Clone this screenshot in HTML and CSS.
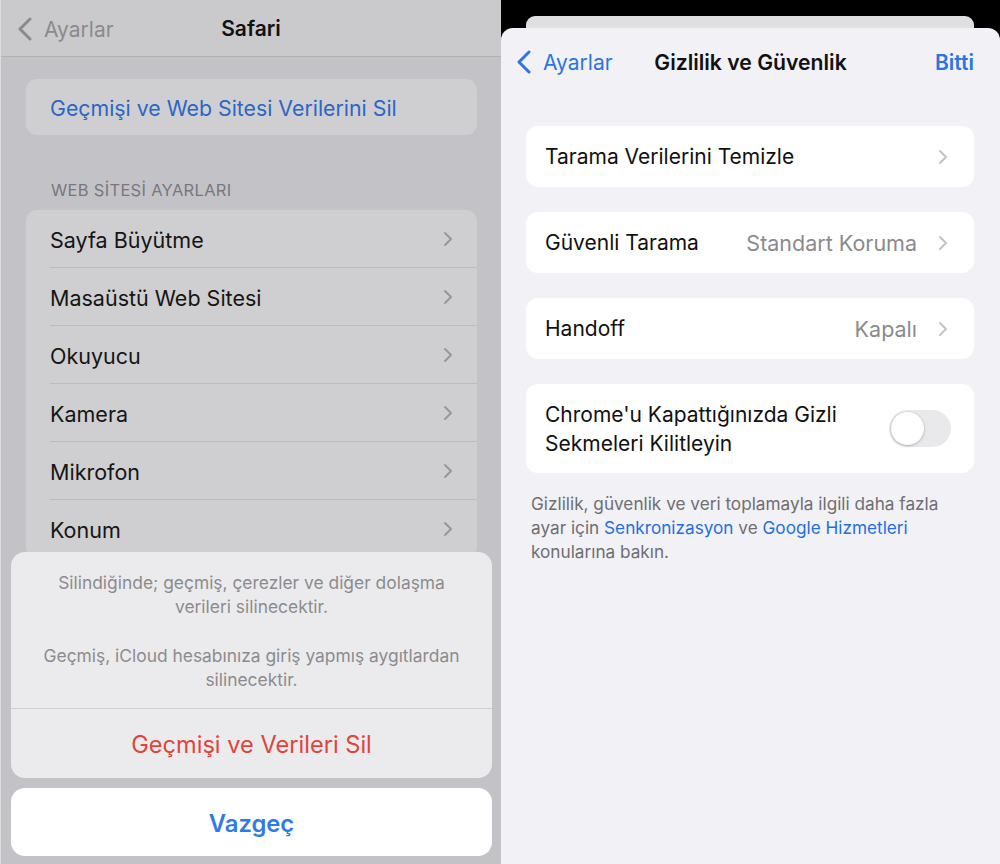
FILE: index.html
```html
<!DOCTYPE html>
<html lang="tr">
<head>
<meta charset="utf-8">
<link rel="stylesheet" href="styles.css">
</head>
<body>
<div class="screen">
  <section class="left">
    <header class="lnav">
      <div class="back">
        <svg class="back-chev" width="16" height="24" viewBox="0 0 16 24"><path d="M13 2 L3 12 L13 22" fill="none" stroke="currentColor" stroke-width="3" stroke-linecap="round" stroke-linejoin="round"/></svg>
        <span>Ayarlar</span>
      </div>
      <div class="ltitle">Safari</div>
    </header>
    <div class="lcontent">
      <div class="lcard single"><span class="link">Geçmişi ve Web Sitesi Verilerini Sil</span></div>
      <div class="lhead">WEB SİTESİ AYARLARI</div>
      <div class="lcard list">
        <div class="lrow"><span>Sayfa Büyütme</span><svg class="chev" width="10" height="16" viewBox="0 0 10 16"><path d="M2 2 L8 8 L2 14" fill="none" stroke="currentColor" stroke-width="2" stroke-linecap="round" stroke-linejoin="round"/></svg></div>
        <div class="lrow"><span>Masaüstü Web Sitesi</span><svg class="chev" width="10" height="16" viewBox="0 0 10 16"><path d="M2 2 L8 8 L2 14" fill="none" stroke="currentColor" stroke-width="2" stroke-linecap="round" stroke-linejoin="round"/></svg></div>
        <div class="lrow"><span>Okuyucu</span><svg class="chev" width="10" height="16" viewBox="0 0 10 16"><path d="M2 2 L8 8 L2 14" fill="none" stroke="currentColor" stroke-width="2" stroke-linecap="round" stroke-linejoin="round"/></svg></div>
        <div class="lrow"><span>Kamera</span><svg class="chev" width="10" height="16" viewBox="0 0 10 16"><path d="M2 2 L8 8 L2 14" fill="none" stroke="currentColor" stroke-width="2" stroke-linecap="round" stroke-linejoin="round"/></svg></div>
        <div class="lrow"><span>Mikrofon</span><svg class="chev" width="10" height="16" viewBox="0 0 10 16"><path d="M2 2 L8 8 L2 14" fill="none" stroke="currentColor" stroke-width="2" stroke-linecap="round" stroke-linejoin="round"/></svg></div>
        <div class="lrow"><span>Konum</span><svg class="chev" width="10" height="16" viewBox="0 0 10 16"><path d="M2 2 L8 8 L2 14" fill="none" stroke="currentColor" stroke-width="2" stroke-linecap="round" stroke-linejoin="round"/></svg></div>
      </div>
    </div>
    <div class="sheet">
      <div class="sheet-group">
        <div class="sheet-msg">
          <p>Silindiğinde; geçmiş, çerezler ve diğer dolaşma<br>verileri silinecektir.</p>
          <p>Geçmiş, iCloud hesabınıza giriş yapmış aygıtlardan<br>silinecektir.</p>
        </div>
        <div class="sheet-btn destructive">Geçmişi ve Verileri Sil</div>
      </div>
      <div class="sheet-cancel">Vazgeç</div>
    </div>
  </section>

  <section class="right">
    <div class="stack">
      <div class="behind"></div>
    </div>
    <div class="modal">
      <header class="rnav">
        <div class="rback">
          <svg width="16" height="24" viewBox="0 0 16 24"><path d="M13 2 L3 12 L13 22" fill="none" stroke="currentColor" stroke-width="3" stroke-linecap="round" stroke-linejoin="round"/></svg>
          <span>Ayarlar</span>
        </div>
        <div class="rtitle">Gizlilik ve Güvenlik</div>
        <div class="done">Bitti</div>
      </header>
      <div class="rcontent">
        <div class="rcard">
          <span class="label">Tarama Verilerini Temizle</span>
          <svg class="rchev" width="10" height="16" viewBox="0 0 10 16"><path d="M2 2 L8 8 L2 14" fill="none" stroke="currentColor" stroke-width="2" stroke-linecap="round" stroke-linejoin="round"/></svg>
        </div>
        <div class="rcard">
          <span class="label">Güvenli Tarama</span>
          <span class="value">Standart Koruma</span>
          <svg class="rchev" width="10" height="16" viewBox="0 0 10 16"><path d="M2 2 L8 8 L2 14" fill="none" stroke="currentColor" stroke-width="2" stroke-linecap="round" stroke-linejoin="round"/></svg>
        </div>
        <div class="rcard">
          <span class="label">Handoff</span>
          <span class="value">Kapalı</span>
          <svg class="rchev" width="10" height="16" viewBox="0 0 10 16"><path d="M2 2 L8 8 L2 14" fill="none" stroke="currentColor" stroke-width="2" stroke-linecap="round" stroke-linejoin="round"/></svg>
        </div>
        <div class="rcard tall">
          <span class="label multi">Chrome'u Kapattığınızda Gizli<br>Sekmeleri Kilitleyin</span>
          <div class="toggle"><div class="knob"></div></div>
        </div>
        <p class="footer">Gizlilik, güvenlik ve veri toplamayla ilgili daha fazla<br>ayar için <span class="blue">Senkronizasyon</span> ve <span class="blue">Google Hizmetleri</span><br>konularına bakın.</p>
      </div>
    </div>
  </section>
</div>
</body>
</html>
```

FILE: styles.css
```css
* { box-sizing: border-box; }
html, body { margin: 0; padding: 0; }
body {
  width: 1000px;
  height: 864px;
  overflow: hidden;
  font-family: "Inter", "Liberation Sans", sans-serif;
  -webkit-font-smoothing: antialiased;
}
.screen {
  display: flex;
  width: 1000px;
  height: 864px;
}

/* ---------- LEFT (Safari, dimmed) ---------- */
.left {
  position: relative;
  width: 501px;
  height: 864px;
  background: #c3c3c7;
  border-left: 1px solid #dcdcde;
}
.lnav {
  position: relative;
  height: 57px;
  background: #cacacc;
  border-bottom: 1px solid #b3b3b6;
  display: flex;
  align-items: center;
  justify-content: center;
  padding-top: 1px;
}
.back {
  position: absolute;
  left: 16px;
  top: 1px;
  height: 56px;
  display: flex;
  align-items: center;
  gap: 11px;
  color: #8a8a8d;
  font-size: 21px;
}
.back-chev { color: #8a8a8d; }
.ltitle {
  font-size: 21px;
  font-weight: 600;
  color: #111;
}
.lcontent {
  padding: 22px 24px 0 25px;
}
.lcard {
  background: #cfcfd1;
  border-radius: 11px;
}
.lcard.single {
  height: 56px;
  display: flex;
  align-items: center;
  padding-left: 24px;
  padding-top: 2px;
}
.link {
  color: #2b66c6;
  font-size: 21.3px;
}
.lhead {
  padding: 45px 0 10px 25px;
  font-size: 16.5px;
  color: #78787c;
  letter-spacing: 0.3px;
}
.lcard.list {
  padding-left: 24px;
}
.lrow {
  height: 58px;
  display: flex;
  align-items: center;
  justify-content: space-between;
  padding-right: 24px;
  padding-top: 2px;
  font-size: 21.5px;
  color: #151515;
  border-bottom: 1px solid #bcbcbe;
}
.lrow:last-child { border-bottom: none; }
.chev { color: #98989b; margin-top: -2px; }

/* action sheet overlay */
.sheet {
  position: absolute;
  left: 10px;
  right: 9px;
  bottom: 8px;
  display: flex;
  flex-direction: column;
  gap: 10px;
}
.sheet-group {
  background: #ebebed;
  border-radius: 14px;
  overflow: hidden;
}
.sheet-msg {
  padding: 19px 10px 16px;
  text-align: center;
  font-size: 17.4px;
  line-height: 24px;
  color: #8b8b8f;
  border-bottom: 1px solid #cfcfd2;
}
.sheet-msg p { margin: 0; }
.sheet-msg p + p { margin-top: 25px; }
.sheet-btn {
  height: 69px;
  display: flex;
  align-items: center;
  justify-content: center;
  font-size: 23.6px;
  padding-top: 1px;
}
.destructive { color: #e0443a; }
.sheet-cancel {
  height: 68px;
  background: #fff;
  border-radius: 14px;
  display: flex;
  align-items: center;
  justify-content: center;
  font-size: 23.8px;
  font-weight: 600;
  color: #2f7be6;
  padding-top: 2px;
}

/* ---------- RIGHT (Chrome modal) ---------- */
.right {
  width: 499px;
  height: 864px;
  background: #000;
  display: flex;
  flex-direction: column;
}
.stack {
  padding: 16px 26px 0 25px;
}
.behind {
  height: 12px;
  background: #dfdfe1;
  border-radius: 9px 9px 0 0;
}
.modal {
  flex: 1;
  background: #f2f2f6;
  border-radius: 12px 12px 0 0;
}
.rnav {
  position: relative;
  height: 68px;
  display: flex;
  align-items: center;
  justify-content: center;
}
.rback {
  position: absolute;
  left: 15px;
  top: 0;
  height: 68px;
  display: flex;
  align-items: center;
  gap: 11px;
  color: #2c74e2;
  font-size: 21px;
}
.rtitle {
  font-size: 21.2px;
  font-weight: 600;
  color: #111;
  margin-left: 0;
}
.done {
  position: absolute;
  right: 26px;
  top: 0;
  height: 68px;
  display: flex;
  align-items: center;
  font-size: 21px;
  font-weight: 600;
  color: #2c74e2;
}
.rcontent {
  padding: 30px 26px 0 25px;
  display: flex;
  flex-direction: column;
  gap: 25px;
}
.rcard {
  height: 61px;
  background: #fff;
  border-radius: 12px;
  display: flex;
  align-items: center;
  padding: 0 26px 0 19px;
  font-size: 21px;
  color: #111;
}
.rcard .label { flex: 1; }
.rcard .value {
  color: #8a8a8e;
  margin-right: 21px;
  font-size: 21.5px;
}
.rchev { color: #c3c3c7; }
.rcard.tall {
  height: 89px;
  padding-right: 23px;
}
.label.multi { line-height: 29px; }
.toggle {
  width: 62px;
  height: 37px;
  border-radius: 19px;
  background: #e9e9eb;
  padding: 2px;
}
.knob {
  width: 33px;
  height: 33px;
  border-radius: 50%;
  background: #fff;
  box-shadow: 0 1px 3px rgba(0,0,0,0.22), 0 0 0 0.5px rgba(0,0,0,0.06);
}
.footer {
  margin: -6px 0 0 5px;
  font-size: 17.2px;
  line-height: 24px;
  color: #6e6e73;
}
.blue { color: #1f6fde; }
```
